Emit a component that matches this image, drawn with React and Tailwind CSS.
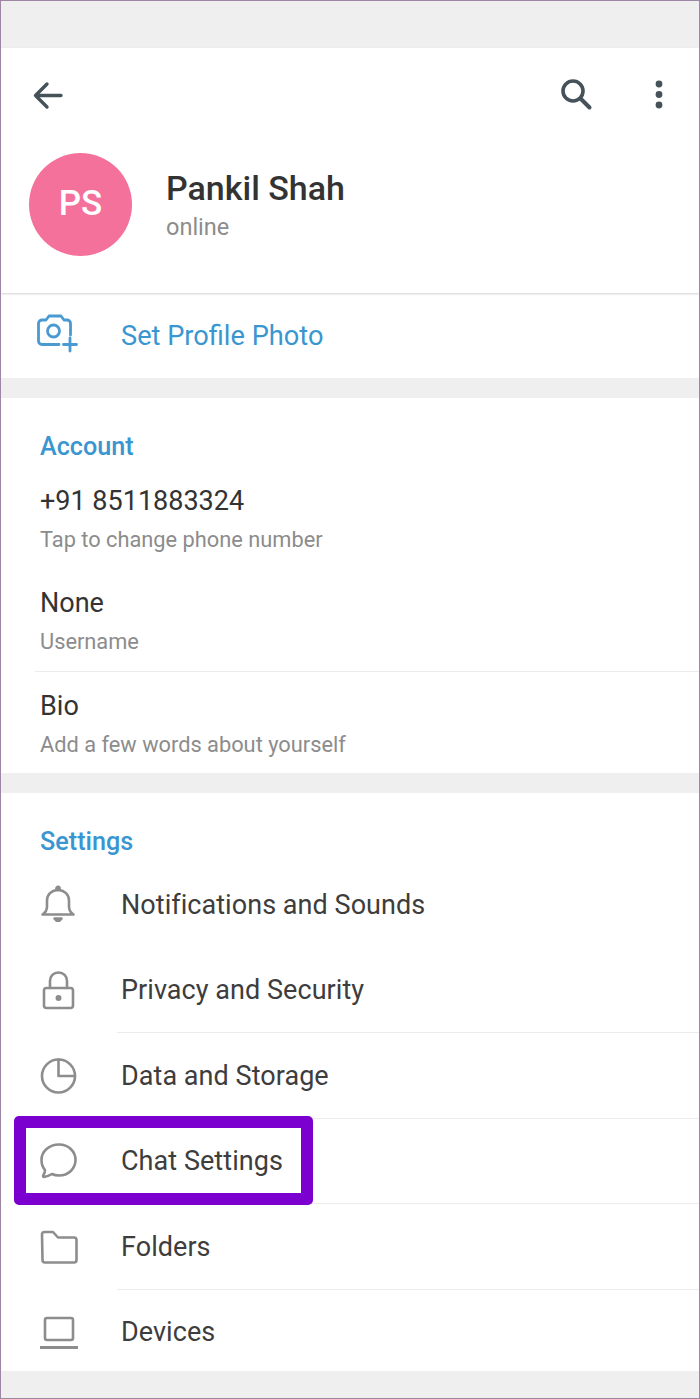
import React from "react";

const Gap = ({ className = "" }) => <div className={`bg-[#efefef] ${className}`} />;

const Icon = ({ children, className = "" }) => (
  <svg viewBox="0 0 44 44" width="44" height="44" fill="none" stroke="#8d8d8d" strokeWidth="2.6" strokeLinecap="round" strokeLinejoin="round" className={`absolute left-[36px] top-1/2 -translate-y-1/2 ${className}`}>
    {children}
  </svg>
);

const Bell = () => (
  <Icon>
    <path d="M5.5 31.5c3-2 4.5-4 4.5-8v-6c0-6 4.700-10 10-10.500h2c5.300.5 10 4.500 10 10.500v6c0 4 1.500 6 4.500 8z" />
    <circle cx="21" cy="5.500" r="1.600" fill="#8d8d8d" />
    <path d="M17.500 35.500h7l-2 2.200h-3z" fill="#8d8d8d" />
  </Icon>
);
const Lock = () => (
  <Icon>
    <rect x="7" y="20" width="29" height="20" rx="2.500" />
    <path d="M13 20v-7c0-5 3.500-8.500 8.500-8.500s8.500 3.500 8.500 8.500v7" />
    <circle cx="21.500" cy="30" r="1.700" fill="#8d8d8d" />
  </Icon>
);
const Pie = () => (
  <Icon>
    <circle cx="21.500" cy="22" r="16.500" />
    <path d="M21.500 5.500v16.500h16.500" />
  </Icon>
);
const Bubble = () => (
  <Icon>
    <path d="M22 5.500c9.500 0 16.500 7 16.500 15.500s-7 15.500-16.500 15.500c-2.500 0-5-.5-7-1.500-2.500 1.500-5 2.500-8 3-.8 0-1.200-.8-.8-1.500 1.200-1.700 1.800-3.500 1.800-5.500-2.500-2.800-3.500-6-3.500-10 0-8.500 7.500-15.500 17.500-15.500z" />
  </Icon>
);
const Folder = () => (
  <Icon>
    <path d="M5 9.500c0-1.500 1-2.500 2.500-2.500h8.500l5 5.500h16c1.500 0 2.500 1 2.500 2.500v20c0 1.500-1 2.500-2.500 2.500h-29c-1.500 0-2.500-1-2.500-2.500z" />
  </Icon>
);
const Laptop = () => (
  <Icon>
    <rect x="8" y="8" width="28" height="22" rx="2" />
    <path d="M3 37.500h38" strokeWidth="3" strokeLinecap="butt" />
  </Icon>
);

const Row = ({ icon, label, line, children }) => (
  <div className="relative h-[85.500px] flex items-center pl-[120px]">
    {icon}
    <span className="text-[27px] leading-8 tracking-[0.05px] text-[#3d3d3d]">{label}</span>
    {line && <div className="absolute left-[116px] right-0 bottom-0 h-px bg-[#ececec]" />}
    {children}
  </div>
);

const Info = ({ title, sub, className = "" }) => (
  <div className={`pl-[39px] ${className}`}>
    <div className="text-[27px] leading-8 text-[#333333]">{title}</div>
    <div className="mt-[7px] text-[21.800px] leading-8 text-[#8c8c8c]">{sub}</div>
  </div>
);

export default function App() {
  return (
    <div className="w-[700px] h-[1399px] box-border border border-[#9c86a3] bg-white flex flex-col overflow-hidden font-['Roboto',sans-serif]">
      <Gap className="h-[47px] shrink-0" />

      <div className="h-[245px] shrink-0 flex flex-col shadow-[0_1px_2px_rgba(0,0,0,0.18)] relative">
        <div className="flex items-center justify-between pt-[29px] pl-[29px] pr-[31px]">
          <svg viewBox="0 0 36 36" width="36" height="36" fill="none" stroke="#46525a" strokeWidth="3.400" strokeLinecap="round" strokeLinejoin="round">
            <path d="M31 18.500H6M17 7L5.500 18.500 17 30" />
          </svg>
          <div className="flex items-center gap-[56px]">
            <svg viewBox="0 0 36 36" width="36" height="36" fill="none" stroke="#46525a" strokeWidth="3.600" strokeLinecap="round">
              <circle cx="15" cy="14" r="10" />
              <path d="M23 22l8.500 8.500" strokeWidth="4" />
            </svg>
            <svg viewBox="0 0 18 36" width="18" height="36" fill="#46525a">
              <circle cx="9" cy="7" r="3.400" />
              <circle cx="9" cy="17.500" r="3.400" />
              <circle cx="9" cy="28" r="3.400" />
            </svg>
          </div>
        </div>
        <div className="flex items-center pl-[28px] mt-[40px]">
          <div className="w-[103px] h-[103px] rounded-full bg-[#f4719b] flex items-center justify-center text-white text-[35px] font-medium">
            PS
          </div>
          <div className="ml-[34px] mt-[2px]">
            <div className="text-[34px] leading-10 font-medium text-[#333333]">Pankil Shah</div>
            <div className="mt-[3px] text-[23.500px] leading-8 text-[#8c8c8c]">online</div>
          </div>
        </div>
      </div>

      <div className="h-[85px] shrink-0 flex items-center relative pl-[120px]">
        <svg viewBox="0 0 44 44" width="44" height="44" fill="none" stroke="#4a9ad2" strokeWidth="2.800" strokeLinecap="round" strokeLinejoin="round" className="absolute left-[34px] top-[18px]">
          <path d="M24 33.500H7c-2 0-3.500-1.500-3.500-3.500V12.500C3.500 10.500 5 9 7 9h4l3-4h12l3 4h3c2 0 3.500 1.500 3.500 3.500V24" />
          <circle cx="18.500" cy="20" r="6" />
          <path d="M35 27v13M28.500 33.500h13" />
        </svg>
        <span className="text-[27.200px] leading-8 text-[#3a96d0]">Set Profile Photo</span>
      </div>

      <Gap className="h-5 shrink-0" />

      <div className="h-[375px] shrink-0 relative">
        <div className="pl-[39px] pt-[33px] text-[25.200px] leading-8 font-medium text-[#3a96d0]">Account</div>
        <Info className="mt-[22px]" title="+91 8511883324" sub="Tap to change phone number" />
        <Info className="mt-[31px]" title="None" sub="Username" />
        <div className="ml-[34px] mt-[13px] h-px bg-[#ececec]" />
        <Info className="mt-[18px]" title="Bio" sub="Add a few words about yourself" />
      </div>

      <Gap className="h-5 shrink-0" />

      <div className="h-[578px] shrink-0 relative">
        <div className="pl-[39px] pt-[33px] h-[69px] text-[25.200px] leading-8 font-medium text-[#3a96d0]">Settings</div>
        <Row icon={<Bell />} label="Notifications and Sounds" />
        <Row icon={<Lock />} label="Privacy and Security" line />
        <Row icon={<Pie />} label="Data and Storage" line />
        <Row icon={<Bubble />} label="Chat Settings" line>
          <div className="absolute left-[13px] top-[-3px] w-[299px] h-[89px] border-[12px] border-[#7b00cf] rounded-[5px]" />
        </Row>
        <Row icon={<Folder />} label="Folders" line />
        <Row icon={<Laptop />} label="Devices" />
      </div>

      <Gap className="flex-1" />
    </div>
  );
}
